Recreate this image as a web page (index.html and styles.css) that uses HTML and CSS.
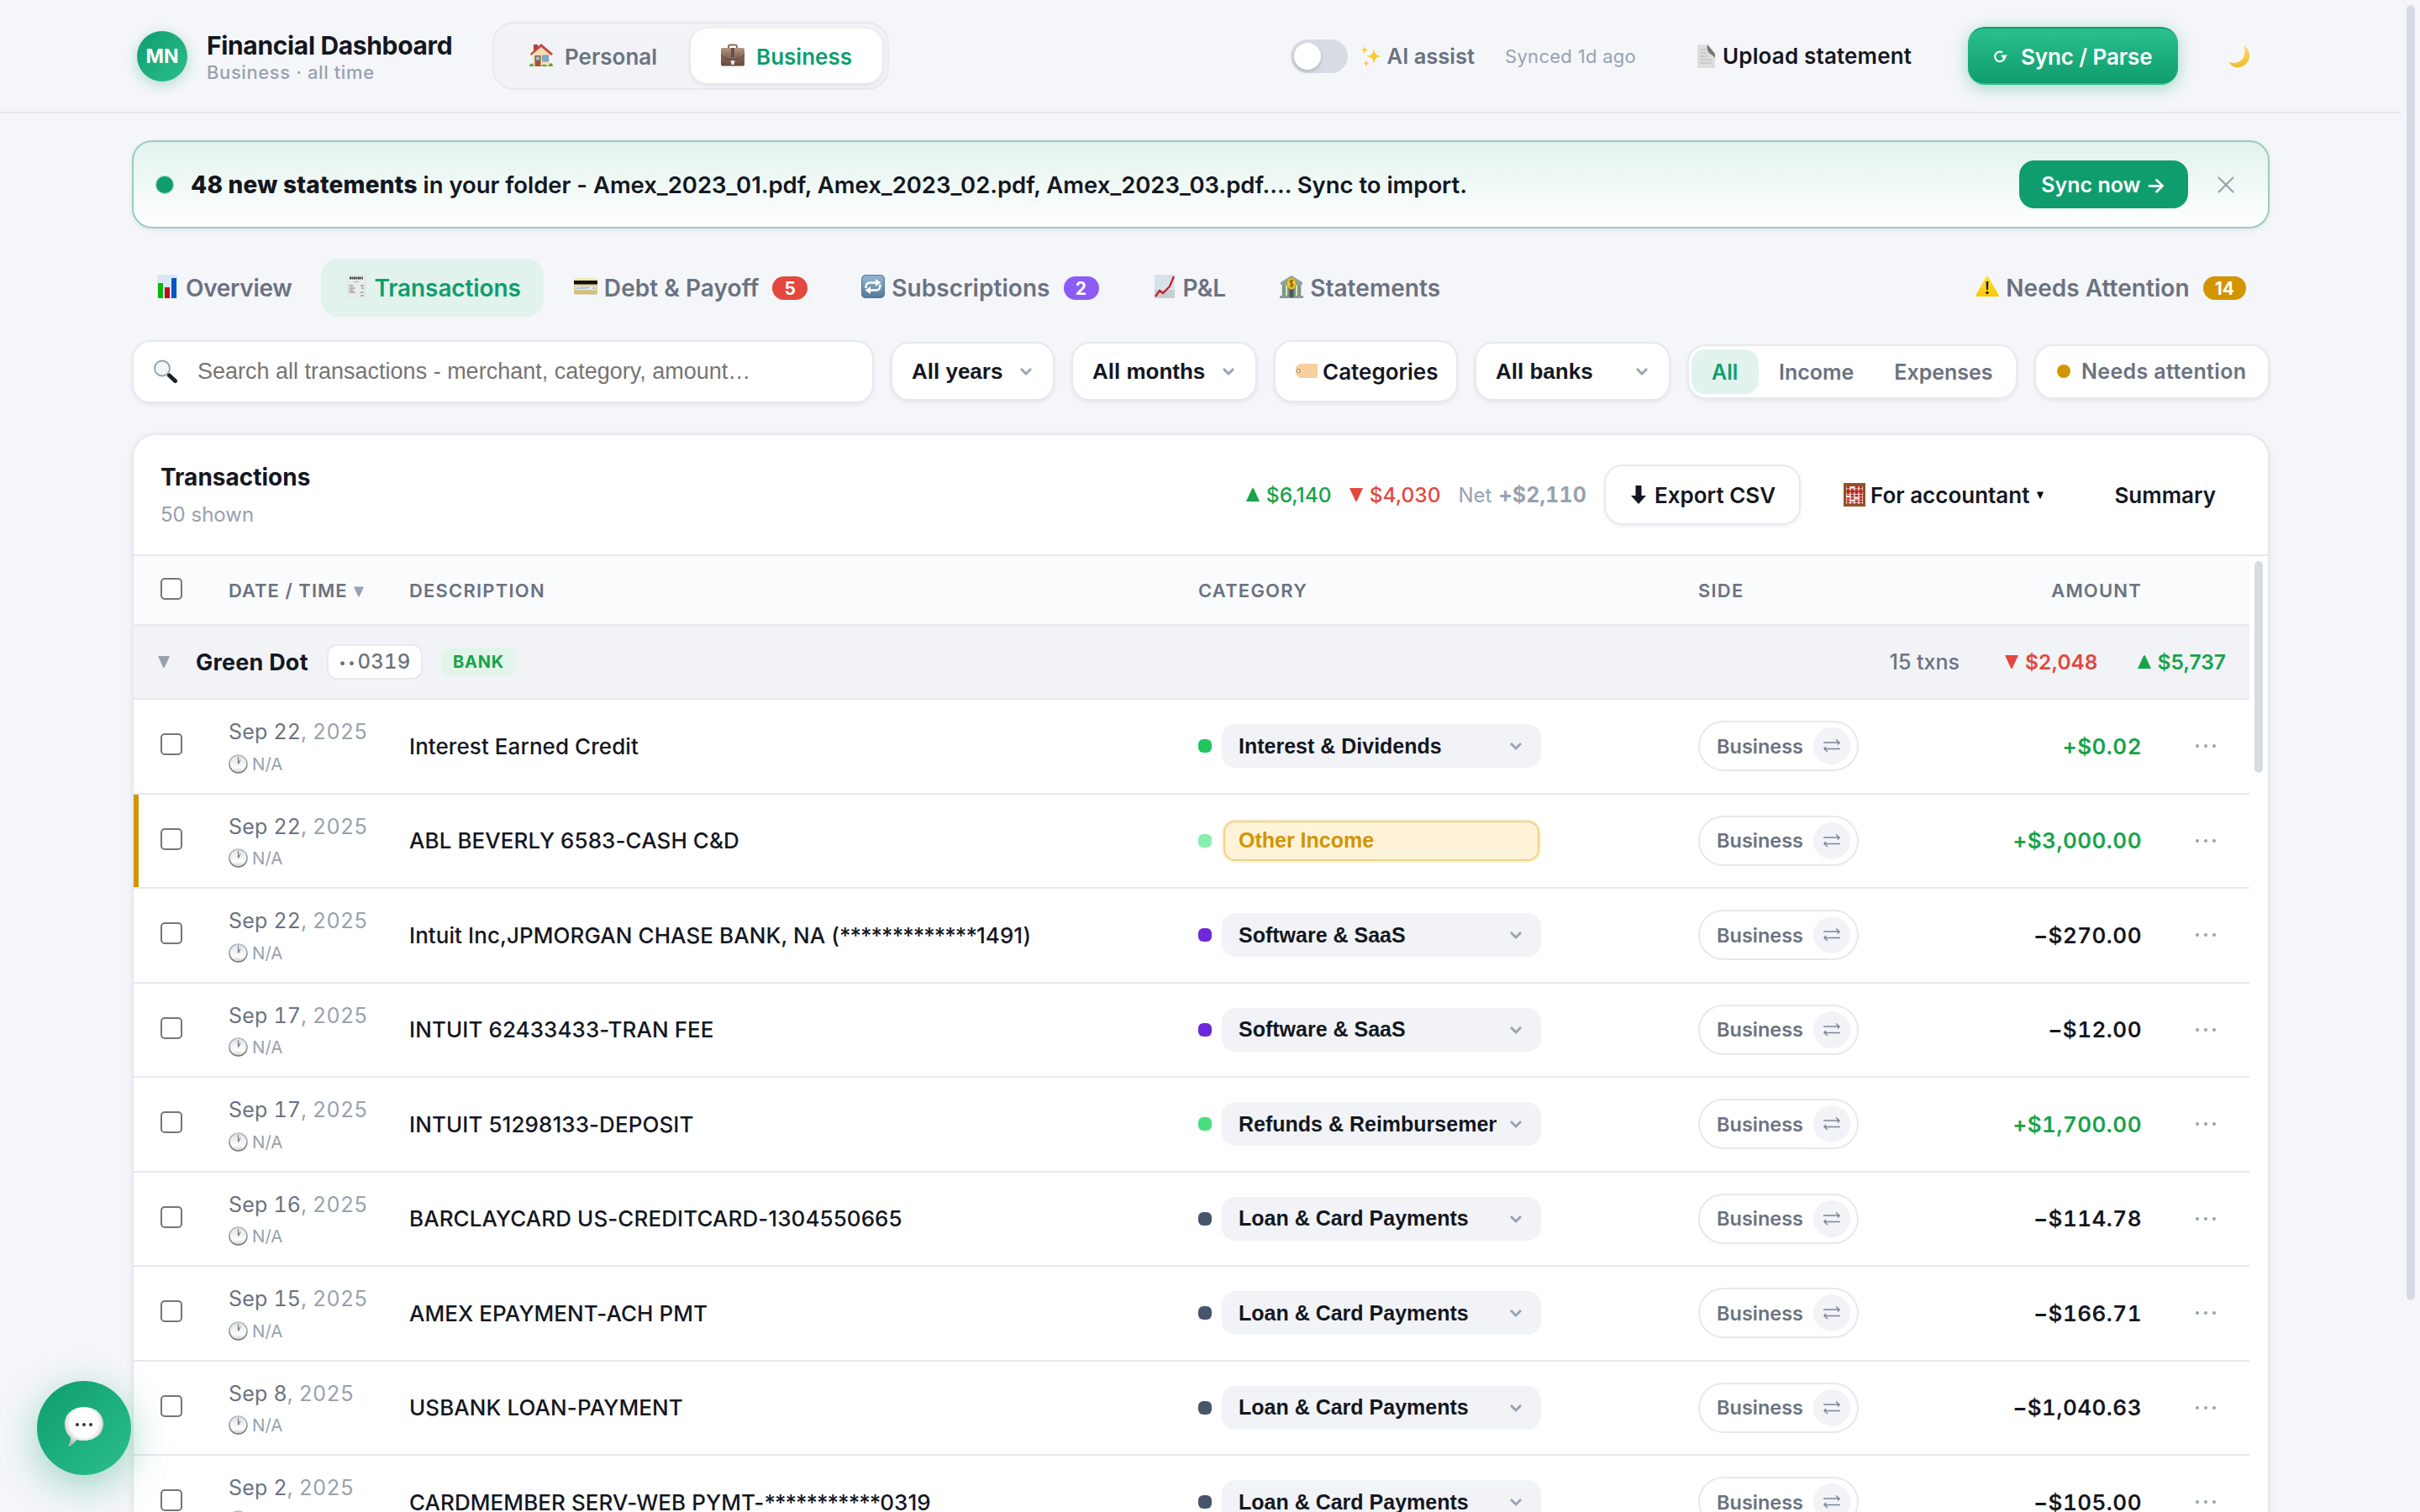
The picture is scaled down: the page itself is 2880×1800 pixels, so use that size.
FILE: index.html
```html
<!DOCTYPE html>
<html lang="en">
<head>
  <meta charset="UTF-8" />
  <title>Financial Dashboard</title>
  <link rel="stylesheet" href="styles.css">
</head>
<body>
  <!-- Icon sprite -->
  <svg class="sprite" width="0" height="0">
    <defs>
      <linearGradient id="gCase" x1="0" y1="0" x2="0" y2="1"><stop offset="0" stop-color="#b79680"/><stop offset=".45" stop-color="#8a6c5a"/><stop offset="1" stop-color="#65493c"/></linearGradient>
      <linearGradient id="gCard" x1="0" y1="0" x2="0" y2="1"><stop offset="0" stop-color="#f3ecb4"/><stop offset="1" stop-color="#c9bd78"/></linearGradient>
      <linearGradient id="gBlue" x1="0" y1="0" x2="0" y2="1"><stop offset="0" stop-color="#96b9d6"/><stop offset="1" stop-color="#557796"/></linearGradient>
      <linearGradient id="gMoon" x1="0" y1="0" x2="0" y2="1"><stop offset="0" stop-color="#f7dc7c"/><stop offset="1" stop-color="#f0bd25"/></linearGradient>
      <linearGradient id="gWarn" x1="0" y1="0" x2="0" y2="1"><stop offset="0" stop-color="#ffe04a"/><stop offset="1" stop-color="#fcc800"/></linearGradient>
      <radialGradient id="gBubble" cx=".5" cy=".4" r=".6"><stop offset=".6" stop-color="#fff"/><stop offset="1" stop-color="#b9b9b9"/></radialGradient>
      <linearGradient id="gClock" x1="0" y1="0" x2="0" y2="1"><stop offset="0" stop-color="#b4bcc6"/><stop offset="1" stop-color="#6f6f70"/></linearGradient>
      <linearGradient id="gFace" x1="0" y1="0" x2="0" y2="1"><stop offset="0" stop-color="#dfe2e6"/><stop offset=".7" stop-color="#fdfdfd"/><stop offset="1" stop-color="#c9c9c9"/></linearGradient>
    </defs>
    <symbol id="i-house" viewBox="0 0 28 28">
      <path d="M5 1h5v8H5z" fill="#a8423a"/>
      <path d="M4 12 14 3l10 9v15H4z" fill="#f3dfb8"/>
      <path d="M14 0 28 12l-2 2L14 4 2 14l-1-2z" fill="#c4473f"/>
      <path d="M6.500 14h7v13h-7z" fill="#9c5533"/><path d="M8 15.500h4v4H8z" fill="#8ccbf2"/>
      <path d="M15.500 14h7v7h-7z" fill="#6fb0dd" stroke="#8a98a0" stroke-width="1"/>
      <path d="M0 27c0-4 4-5 5-1v1zM23 27c0-5 5-5 5 0zM14 27c1-3 6-3 8 0z" fill="#6d9b45"/>
    </symbol>
    <symbol id="i-case" viewBox="0 0 28 28">
      <path d="M9 6V3.500C9 2 10 1.500 11 1.500h6c1 0 2 .5 2 2V6" fill="none" stroke="#8b6f5f" stroke-width="2"/>
      <rect y="5" width="28" height="21.500" rx="2" fill="url(#gCase)"/>
      <path d="M0 13c4 5 9 6 14 6s10-1 14-6" fill="none" stroke="#5a4034" stroke-width="1"/>
      <path d="M12 5h4v11h-4z" fill="#6a5043"/><path d="M11.500 20h5l-1 5h-3z" fill="#e8e6e3"/>
    </symbol>
    <symbol id="i-chart" viewBox="0 0 28 28">
      <path d="M2 0h24v28H2z" fill="#dbe8f2"/>
      <path d="M3 10h6v18H3z" fill="#08b512"/><path d="M11 15h6v13h-6z" fill="#c40d1c"/><path d="M19 4h6v24h-6z" fill="#0a55c4"/>
    </symbol>
    <symbol id="i-receipt" viewBox="0 0 28 28">
      <path d="M3.500 0h21v28h-21z" fill="#ececec" stroke="#d6d6d6" stroke-width=".6"/>
      <path d="M6 4h16" stroke="#444" stroke-width="3" stroke-dasharray="2 .5"/>
      <path d="M11 8.500h6" stroke="#aaa"/>
      <path d="M5.500 13h5M5.500 16h7M5.500 18.500h5M5.500 21h7M19 13h4M20 16h3M19 21h4M19 25h4" stroke="#999" stroke-width="1.400"/>
    </symbol>
    <symbol id="i-card" viewBox="0 0 28 28">
      <rect y="4" width="28" height="19.500" rx="1.500" fill="url(#gCard)"/>
      <path d="M0 7h28v4.500H0z" fill="#111"/><path d="M2 14h24v4H2z" fill="#e9eaf0"/>
      <path d="M3 16.500c2-2 3 1 5-.5s3 1 5 0 3 0 5-.5M22 16h3" stroke="#7b8fd0" fill="none"/>
    </symbol>
    <symbol id="i-repeat" viewBox="0 0 28 28">
      <rect width="28" height="28" rx="5" fill="url(#gBlue)"/><rect x=".7" y=".7" width="26.600" height="26.600" rx="4.500" fill="none" stroke="#54779a" stroke-width="1"/>
      <path d="M5.500 16c0-5 1.500-6.500 5-6.500h8M22.500 12c0 5-1.500 6.500-5 6.500h-8" fill="none" stroke="#fff" stroke-width="2.600"/>
      <path d="M17 5 23.500 9.500 17 14zM11 14 4.500 18.500 11 23z" fill="#fff"/>
    </symbol>
    <symbol id="i-trend" viewBox="0 0 28 28">
      <path d="M2 0h24v28H2z" fill="#d7e3eb"/><path d="M2 18h24v10H2z" fill="#c6cfd5"/>
      <path d="m3 26 5-7 4 3 5-5 3-3 5-12" fill="none" stroke="#d0161c" stroke-width="2.200"/>
    </symbol>
    <symbol id="i-bank" viewBox="0 0 28 28">
      <path d="M1 9 14 1l13 8v3H1z" fill="#8fa5a0"/>
      <path d="M2 12h24v13H2z" fill="#dfe3c0"/><path d="M3 12h4v13H3zM9 12h3v13H9zM16 12h3v13h-3zM21 12h4v13h-4z" fill="#7f958e"/>
      <path d="M0 25h28v3H0z" fill="#8a9b95"/><path d="M11.500 17h5v10h-5z" fill="#4b5b57"/>
      <ellipse cx="14" cy="10.500" rx="5.500" ry="7" fill="#f1c92f" stroke="#b68f12"/>
      <path d="M16 8c-1-2-4-1.500-4 .3 0 2.200 4 1.800 4 4 0 2-3.500 2-4 .2M14 5.500v10" fill="none" stroke="#7c5c05" stroke-width="1.200"/>
    </symbol>
    <symbol id="i-warn" viewBox="0 0 28 28">
      <path d="M14 1.500c.8 0 1.200.5 1.600 1.200L27.500 24c.6 1.300 0 2-1.200 2H1.700C.5 26-.1 25.300.5 24L12.400 2.700c.4-.7.800-1.200 1.600-1.200z" fill="url(#gWarn)"/>
      <path d="M12.600 8h2.800L15 18h-2z" fill="#222"/><circle cx="14" cy="21.500" r="1.700" fill="#222"/>
    </symbol>
    <symbol id="i-search" viewBox="0 0 28 28">
      <path d="m15.500 16.500 3 2.800" stroke="#555" stroke-width="2"/>
      <path d="m18.500 19 7 6.500" stroke="#1c2024" stroke-width="5" stroke-linecap="round"/>
      <circle cx="10" cy="10.500" r="9" fill="#f4f5f7" stroke="#8d9eae" stroke-width="1.800"/>
    </symbol>
    <symbol id="i-tag" viewBox="0 0 28 28">
      <path d="M6 5h21v17H6l-5-4V9z" fill="#f8cf9d"/><circle cx="4.500" cy="13.500" r="2" fill="#fff" stroke="#8b7355"/>
    </symbol>
    <symbol id="i-abacus" viewBox="0 0 28 28">
      <path d="M1 0h26v28H1z" fill="#8f5425"/><path d="M4 4h20v21H4z" fill="#f4e6e0"/>
      <path d="M4 10h20" stroke="#8f5425" stroke-width="2"/>
      <path d="M6.500 4v21M11.500 4v21M16.500 4v21M21.500 4v21" stroke="#c32222" stroke-width="3.600" stroke-dasharray="2.600 .7"/>
      <path d="M9 5h5M4 16h5M14 18h5M9 21h5" stroke="#f6eeee" stroke-width="2"/>
    </symbol>
    <symbol id="i-doc" viewBox="0 0 28 28">
      <path d="M3 0h12l9 11v17H3z" fill="#dedede"/><path d="M15 0c-1 5 0 8 2 10 2 1.500 5 3 7 6v-5z" fill="#777"/>
      <path d="M6 6h7M6 10h8M6 14h9M6 18h14M6 22h14" stroke="#c5c5c5" stroke-width="1.300"/>
    </symbol>
    <symbol id="i-spark" viewBox="0 0 28 28">
      <path d="M17 4c1 7 2 9 9 10-7 1-8 3-9 10-1-7-2-9-9-10 7-1 8-3 9-10z" fill="#fbc92f"/>
      <path d="M6 1c.5 4 1 5 4.500 5.500C7 7 6.500 8 6 12 5.500 8 5 7 1.500 6.500 5 6 5.500 5 6 1zM8 18c.4 3 1 4 4 4.500-3 .5-3.600 1.500-4 4.500-.4-3-1-4-4-4.500 3-.5 3.600-1.500 4-4.500z" fill="#fbc92f"/>
    </symbol>
    <symbol id="i-moon" viewBox="0 0 28 28">
      <path d="M18 1c11 7 9 22-4 26-6 1-11-1-13-6 13 4 22-6 17-20z" fill="url(#gMoon)"/>
    </symbol>
    <symbol id="i-clock" viewBox="0 0 28 28">
      <circle cx="14" cy="14" r="12.800" fill="url(#gFace)" stroke="url(#gClock)" stroke-width="1.800"/>
      <path d="M14 14V3.500M14 14l3-6" stroke="#777" stroke-width="1.400"/>
    </symbol>
    <symbol id="i-bubble" viewBox="0 0 48 48">
      <path d="M24 0c14 0 23 9 23 20S38 40 24 40c-3 0-6 0-9-1-2 3-5 7-10 8 2-3 3-7 3-11C3 32 1 26 1 20 1 9 10 0 24 0z" fill="url(#gBubble)"/>
      <circle cx="16" cy="21" r="2" fill="#333"/><circle cx="24" cy="21" r="2" fill="#333"/><circle cx="32" cy="21" r="2" fill="#333"/>
    </symbol>
    <symbol id="i-chev" viewBox="0 0 16 10"><path d="m2 2 6 6 6-6" fill="none" stroke="#98a1af" stroke-width="2.800"/></symbol>
    <symbol id="i-swap" viewBox="0 0 22 18"><path d="M1 5h19M16 1.500 20 5l-2 2.500M21 12.500H2M6 16l-4-3.500L4 10" fill="none" stroke="#7b8494" stroke-width="1.500"/></symbol>
    <symbol id="i-down" viewBox="0 0 18 22"><path d="M5.500 0h7v12H18l-9 10-9-10h5.500z" fill="#14171f"/></symbol>
    <symbol id="i-x" viewBox="0 0 20 20"><path d="m1 1 18 18M19 1 1 19" stroke="#98a1af" stroke-width="2.200"/></symbol>
    <symbol id="i-tri" viewBox="0 0 16 16"><path d="M0 0h16L9 15.300q-1 1.400-2 0z"/></symbol>
    <symbol id="i-reload" viewBox="0 0 16 16"><path d="M10.500 3.200A5.500 5.500 0 1 0 13 8.500" fill="none" stroke="#fff" stroke-width="2"/><path d="M8.500 6h7.500l-4 5z" fill="#fff"/></symbol>
  </svg>

  <header class="topbar">
    <div class="avatar">MN</div>
    <div class="brand">
      <div class="brand-title">Financial Dashboard</div>
      <div class="brand-sub">Business · all time</div>
    </div>
    <div class="mode-switch">
      <button class="mode"><svg class="icon"><use href="#i-house"/></svg>Personal</button>
      <button class="mode active"><svg class="icon"><use href="#i-case"/></svg>Business</button>
    </div>
    <div class="top-actions">
      <span class="toggle"><span class="knob"></span></span>
      <span class="ai"><svg class="icon"><use href="#i-spark"/></svg>AI assist</span>
      <span class="synced">Synced 1d ago</span>
      <span class="upload"><svg class="icon"><use href="#i-doc"/></svg>Upload statement</span>
      <button class="sync-btn"><svg class="reload"><use href="#i-reload"/></svg>Sync / Parse</button>
      <svg class="icon moon"><use href="#i-moon"/></svg>
    </div>
  </header>

  <main class="page">
    <div class="banner">
      <span class="banner-dot"></span>
      <div class="banner-text"><b>48 new statements</b> in your folder - Amex_2023_01.pdf, Amex_2023_02.pdf, Amex_2023_03.pdf.... Sync to import.</div>
      <button class="banner-btn">Sync now →</button>
      <svg class="close"><use href="#i-x"/></svg>
    </div>

    <nav class="tabs">
      <a class="tab"><svg class="icon"><use href="#i-chart"/></svg>Overview</a>
      <a class="tab active"><svg class="icon"><use href="#i-receipt"/></svg>Transactions</a>
      <a class="tab"><svg class="icon"><use href="#i-card"/></svg>Debt &amp; Payoff <span class="badge red">5</span></a>
      <a class="tab"><svg class="icon"><use href="#i-repeat"/></svg>Subscriptions <span class="badge purple">2</span></a>
      <a class="tab"><svg class="icon"><use href="#i-trend"/></svg>P&amp;L</a>
      <a class="tab"><svg class="icon"><use href="#i-bank"/></svg>Statements</a>
      <a class="tab last"><svg class="icon"><use href="#i-warn"/></svg>Needs Attention <span class="badge amber">14</span></a>
    </nav>

    <div class="filters">
      <div class="search"><svg class="icon"><use href="#i-search"/></svg><span>Search all transactions - merchant, category, amount…</span></div>
      <div class="select years">All years<svg class="chev"><use href="#i-chev"/></svg></div>
      <div class="select months">All months<svg class="chev"><use href="#i-chev"/></svg></div>
      <div class="cat-btn"><svg class="icon"><use href="#i-tag"/></svg>Categories</div>
      <div class="select banks">All banks<svg class="chev"><use href="#i-chev"/></svg></div>
      <div class="segment"><span class="seg active">All</span><span class="seg">Income</span><span class="seg">Expenses</span></div>
      <div class="attention"><i></i>Needs attention</div>
    </div>

    <section class="card">
      <div class="card-head">
        <div>
          <div class="card-title">Transactions</div>
          <div class="card-sub">50 shown</div>
        </div>
        <div class="card-actions">
          <span class="sum up"><svg class="tri flip"><use href="#i-tri"/></svg>$6,140</span>
          <span class="sum down"><svg class="tri"><use href="#i-tri"/></svg>$4,030</span>
          <span class="sum net">Net <b>+$2,110</b></span>
          <button class="export"><svg class="arrow"><use href="#i-down"/></svg>Export CSV</button>
          <button class="ghost"><svg class="icon"><use href="#i-abacus"/></svg>For accountant<svg class="caret"><use href="#i-tri"/></svg></button>
          <button class="ghost">Summary</button>
        </div>
      </div>

      <div class="table">
        <div class="row thead">
          <span><i class="check"></i></span>
          <span class="sorted">DATE / TIME<svg class="sort"><use href="#i-tri"/></svg></span>
          <span>DESCRIPTION</span>
          <span>CATEGORY</span>
          <span>SIDE</span>
          <span class="right">AMOUNT</span>
        </div>
        <div class="group">
          <svg class="fold"><use href="#i-tri"/></svg>
          <span class="group-name">Green Dot</span>
          <span class="acct"><b>••</b>0319</span>
          <span class="kind">BANK</span>
          <span class="txns">15 txns</span>
          <span class="sum down"><svg class="tri"><use href="#i-tri"/></svg>$2,048</span>
          <span class="sum up"><svg class="tri flip"><use href="#i-tri"/></svg>$5,737</span>
        </div>
        <div id="rows"></div>
        <div class="table-scroll"></div>
      </div>
    </section>
  </main>

  <div class="page-scroll"></div>
  <button class="chat"><svg><use href="#i-bubble"/></svg></button>

  <script>
    const rows = [
      { day: "Sep 22", desc: "Interest Earned Credit", cat: "Interest & Dividends", color: "#22c55e", amount: "+$0.02" },
      { day: "Sep 22", desc: "ABL BEVERLY 6583-CASH C&D", cat: "Other Income", color: "#86efac", amount: "+$3,000.00", flag: true },
      { day: "Sep 22", desc: "Intuit Inc,JPMORGAN CHASE BANK, NA (*************1491)", cat: "Software & SaaS", color: "#6d28d9", amount: "−$270.00" },
      { day: "Sep 17", desc: "INTUIT 62433433-TRAN FEE", cat: "Software & SaaS", color: "#6d28d9", amount: "−$12.00" },
      { day: "Sep 17", desc: "INTUIT 51298133-DEPOSIT", cat: "Refunds & Reimbursements", color: "#4ade80", amount: "+$1,700.00" },
      { day: "Sep 16", desc: "BARCLAYCARD US-CREDITCARD-1304550665", cat: "Loan & Card Payments", color: "#475569", amount: "−$114.78" },
      { day: "Sep 15", desc: "AMEX EPAYMENT-ACH PMT", cat: "Loan & Card Payments", color: "#475569", amount: "−$166.71" },
      { day: "Sep 8", desc: "USBANK LOAN-PAYMENT", cat: "Loan & Card Payments", color: "#475569", amount: "−$1,040.63" },
      { day: "Sep 2", desc: "CARDMEMBER SERV-WEB PYMT-***********0319", cat: "Loan & Card Payments", color: "#475569", amount: "−$105.00" }
    ];

    document.getElementById("rows").innerHTML = rows.map(r => `
      <div class="row ${r.flag ? "flagged" : ""}">
        <span><i class="check"></i></span>
        <span class="date">
          <span class="day">${r.day}<em>, 2025</em></span>
          <span class="time"><svg class="clock"><use href="#i-clock"/></svg>N/A</span>
        </span>
        <span class="desc">${r.desc.replace("&", "&amp;").replace(/\*+/, "<span class=\"mask\">$&</span>")}</span>
        <span class="category">
          <i class="dot" style="background:${r.color}"></i>
          <span class="pick"><span class="pick-label">${r.cat.replace("&", "&amp;")}</span>${r.flag ? "" : '<svg class="chev"><use href="#i-chev"/></svg>'}</span>
        </span>
        <span><span class="side">Business<span class="swap"><svg><use href="#i-swap"/></svg></span></span></span>
        <span class="amount ${r.amount[0] === "+" ? "in" : ""}">${r.amount}</span>
        <span class="more"><i></i><i></i><i></i></span>
      </div>`).join("");
  </script>
</body>
</html>
```
FILE: styles.css
```css
* {
  box-sizing: border-box;
}

body {
  margin: 0;
  width: 2880px;
  height: 1800px;
  overflow: hidden;
  background: #f5f6fa;
  color: #14171f;
  font-family: Inter, sans-serif;
  font-size: 26px;
}

button {
  font: inherit;
  color: inherit;
  border: none;
  background: none;
  padding: 0;
}

i,
em {
  font-style: normal;
}

.sprite {
  position: absolute;
}

.icon {
  width: 28px;
  height: 28px;
  flex: none;
}

/* Top bar */
.topbar {
  width: 2858px;
  height: 135px;
  padding: 0 159px 0 163px;
  border-bottom: 2px solid #e7e9ee;
  display: flex;
  align-items: center;
}

.avatar {
  width: 60px;
  height: 60px;
  border-radius: 50%;
  background: linear-gradient(135deg, #0f9d6e, #2bbf8c);
  box-shadow: 0 4px 16px rgba(15, 157, 110, 0.3);
  color: #fff;
  font-size: 23px;
  font-weight: 700;
  line-height: 61px;
  text-align: center;
}

.brand {
  width: 340px;
  margin-left: 23px;
  padding-top: 3px;
}

.brand-title {
  font-size: 30px;
  font-weight: 700;
  line-height: 36px;
  letter-spacing: -0.35px;
}

.brand-sub {
  font-size: 22px;
  font-weight: 500;
  line-height: 28px;
  letter-spacing: 0.6px;
  color: #98a1af;
}

.mode-switch {
  display: flex;
  gap: 4px;
  height: 81px;
  padding: 6px;
  border: 2px solid #e7e9ee;
  border-radius: 26px;
  background: #f1f3f7;
}

.mode {
  display: flex;
  align-items: center;
  gap: 14px;
  padding: 2px 36px 0;
  border-radius: 20px;
  font-weight: 600;
  color: #6b7280;
}

.mode .icon {
  margin-top: -4px;
}

.mode.active {
  background: #fff;
  color: #0f9d6e;
  box-shadow: 0 2px 6px rgba(20, 25, 40, 0.1);
}

.top-actions {
  margin-left: auto;
  display: flex;
  align-items: center;
}

.toggle {
  width: 68px;
  height: 40px;
  padding: 4px;
  border-radius: 20px;
  background: #d7dce4;
}

.knob {
  display: block;
  width: 32px;
  height: 32px;
  border-radius: 50%;
  background: #fff;
  box-shadow: 0 2px 4px rgba(0, 0, 0, 0.2);
}

.ai {
  display: flex;
  align-items: center;
  gap: 5px;
  margin-left: 14px;
  font-weight: 600;
  font-size: 25.5px;
  color: #6b7280;
}

.synced {
  margin-left: 36px;
  width: 226px;
  font-size: 22px;
  letter-spacing: 0.3px;
  color: #98a1af;
}

.upload {
  display: flex;
  align-items: center;
  gap: 5px;
  width: 325px;
  font-weight: 600;
  letter-spacing: 0.15px;
}

.sync-btn {
  display: flex;
  align-items: center;
  gap: 16px;
  width: 250px;
  height: 69px;
  padding: 1px 0 0 30px;
  border-radius: 20px;
  background: linear-gradient(#2bc08d, #0f9d6e);
  border-top: 2px solid #0f9d6e;
  border-bottom: 2px solid #2bc08d;
  box-shadow: 0 4px 20px rgba(15, 157, 110, 0.35);
  color: #fff;
  font-weight: 600;
  letter-spacing: -0.1px;
}

.reload {
  width: 17px;
  height: 17px;
}

.moon {
  margin: 0 19px 0 60px;
}

/* Page column */
.page {
  width: 2544px;
  margin: 32px 0 0 157px;
}

.banner {
  display: flex;
  align-items: center;
  height: 105px;
  padding: 0 40px 0 27px;
  border: 2px solid #9accc0;
  border-radius: 24px;
  background: linear-gradient(#e1f3ec, #fff);
  box-shadow: 0 2px 6px rgba(20, 25, 40, 0.07);
}

.banner-dot {
  width: 20px;
  height: 20px;
  border-radius: 50%;
  background: #0f9d6e;
  box-shadow: 0 0 0 1px rgba(15, 157, 110, 0.35);
}

.banner-text {
  flex: 1;
  margin-left: 21px;
  font-size: 27.5px;
  font-weight: 600;
  letter-spacing: -0.04px;
}

.banner-text b {
  font-size: 28px;
  font-weight: 800;
  letter-spacing: 0.2px;
}

.banner-btn {
  width: 201px;
  height: 57px;
  border-radius: 18px;
  background: #0f9d6e;
  color: #fff;
  font-size: 25px;
  font-weight: 600;
}

.close {
  width: 20px;
  height: 20px;
  margin-left: 35px;
}

/* Tabs */
.tabs {
  display: flex;
  gap: 8px;
  margin-top: 36px;
}

.tab {
  display: flex;
  align-items: center;
  height: 69px;
  padding: 0 28px;
  border-radius: 20px;
  font-size: 28px;
  font-weight: 600;
  letter-spacing: 0.05px;
  color: #6b7280;
}

.tab:first-child {
  padding-right: 26px;
  letter-spacing: -0.3px;
}

.tab .icon {
  margin: -3px 8px 0 0;
}

.tab.active {
  padding-right: 27px;
  background: #e1f3ec;
  color: #0f9d6e;
  letter-spacing: -0.1px;
}

.tab.last {
  margin-left: auto;
}

.badge {
  height: 28px;
  min-width: 42px;
  margin-left: 16px;
  padding: 0 14px;
  border-radius: 14px;
  color: #fff;
  font-size: 21px;
  font-weight: 700;
  line-height: 29px;
  text-align: center;
}

.red { background: #e2483d; }
.purple { background: #8b5cf6; }
.amber { background: #d29500; }

/* Filters */
.filters {
  display: flex;
  align-items: center;
  gap: 20px;
  height: 76px;
  margin-top: 27px;
}

.search,
.select,
.cat-btn,
.segment,
.attention {
  display: flex;
  align-items: center;
  background: #fff;
  border: 2px solid #e7e9ee;
  border-radius: 22px;
  box-shadow: 0 2px 5px rgba(20, 25, 40, 0.07);
}

.search {
  flex: 1;
  height: 75px;
  padding: 0 24px;
  gap: 24px;
  font: 27px "Liberation Sans", sans-serif;
  color: #757575;
}

.select {
  justify-content: space-between;
  height: 70px;
  padding: 0 24px 0 23px;
  font: bold 26px "Liberation Sans", sans-serif;
}

.years { width: 195px; }
.months { width: 221px; }
.banks { width: 233px; }

.chev {
  width: 16px;
  height: 10px;
  flex: none;
}

.cat-btn {
  width: 219px;
  height: 74px;
  padding-left: 23px;
  gap: 5px;
  font-weight: 600;
}

.segment {
  width: 393px;
  height: 65px;
  padding: 0 3px;
}

.seg {
  height: 53px;
  padding: 0 24px;
  border-radius: 16px;
  font-size: 25px;
  font-weight: 600;
  line-height: 54px;
  color: #6b7280;
}

.seg.active {
  width: 80px;
  background: #e1f3ec;
  color: #0f9d6e;
}

.attention {
  width: 280px;
  height: 65px;
  padding-left: 25px;
  gap: 13px;
  font-size: 25px;
  font-weight: 600;
  letter-spacing: 0.35px;
  color: #6b7280;
}

.attention i {
  width: 16px;
  height: 16px;
  border-radius: 50%;
  background: #d29500;
}

/* Transactions card */
.card {
  height: 1284px;
  margin-top: 36px;
  background: #fff;
  border: 2px solid #e7e9ee;
  border-bottom: none;
  border-radius: 28px 28px 0 0;
  box-shadow: 0 2px 8px rgba(20, 25, 40, 0.07);
  overflow: hidden;
}

.card-head {
  display: flex;
  align-items: center;
  justify-content: space-between;
  height: 144px;
  padding: 0 28px 0 32px;
  border-bottom: 2px solid #e7e9ee;
}

.card-title {
  font-size: 28px;
  font-weight: 700;
  line-height: 46px;
}

.card-sub {
  padding-top: 1px;
  font-size: 24px;
  line-height: 42px;
  color: #98a1af;
}

.card-actions {
  display: flex;
  align-items: center;
}

.sum {
  display: flex;
  align-items: center;
  gap: 8px;
  font-size: 24.5px;
  font-weight: 500;
  margin-right: 21px;
}

.up { color: #16a34a; fill: #16a34a; }
.down { color: #e2483d; fill: #e2483d; }

.net {
  color: #98a1af;
  font-weight: 400;
  font-size: 24px;
  font-variant-numeric: tabular-nums;
}

.net b {
  font-size: 25px;
  letter-spacing: 0.1px;
}

.tri {
  width: 16px;
  height: 16px;
}

.flip {
  transform: rotate(180deg);
}

.export {
  display: flex;
  align-items: center;
  gap: 10px;
  width: 234px;
  height: 72px;
  margin-right: 16px;
  padding-left: 30px;
  border: 2px solid #e7e9ee;
  border-radius: 22px;
  box-shadow: 0 2px 5px rgba(20, 25, 40, 0.07);
  font-weight: 600;
}

.arrow {
  width: 18px;
  height: 22px;
}

.ghost {
  display: flex;
  align-items: center;
  gap: 5px;
  padding: 0 34px;
  font-weight: 600;
}

.ghost + .ghost {
  margin-left: 16px;
}

.caret {
  width: 8px;
  height: 9px;
  margin-left: 4px;
}

/* Table */
.table {
  position: relative;
}

.row {
  display: grid;
  grid-template-columns: 81px 215px 939px 595px 228px 300px 128px;
  align-items: center;
  width: 2518px;
  height: 112.5px;
  padding-left: 32px;
  border-bottom: 2px solid #e7e9ee;
}

.thead {
  height: 83px;
  background: #fafbfd;
  font-size: 22px;
  font-weight: 600;
  letter-spacing: 1.2px;
  color: #6b7280;
}

.right {
  text-align: right;
}

.check {
  display: block;
  width: 26px;
  height: 26px;
  margin-top: -4px;
  border: 2px solid #767676;
  border-radius: 5px;
  background: #fff;
}

.sorted {
  letter-spacing: 1px;
}

.sort {
  width: 12px;
  height: 13px;
  margin-left: 7px;
  fill: #98a1af;
}

.group {
  display: flex;
  align-items: center;
  width: 2518px;
  height: 88px;
  padding: 0 7px 0 29px;
  border-bottom: 2px solid #e7e9ee;
  background: #f1f3f7;
}

.fold {
  width: 14px;
  height: 14px;
  fill: #98a1af;
}

.group-name {
  width: 156px;
  margin-left: 31px;
  font-size: 27px;
  font-weight: 700;
  letter-spacing: 0.2px;
}

.acct {
  width: 114px;
  height: 42px;
  border: 2px solid #e7e9ee;
  border-radius: 12px;
  background: #fff;
  color: #6b7280;
  font-size: 24px;
  font-weight: 500;
  line-height: 38px;
  letter-spacing: 0.2px;
  text-align: center;
  white-space: nowrap;
  font-variant-numeric: tabular-nums;
}

.acct b {
  font-size: 15px;
  font-weight: 500;
  letter-spacing: 3px;
  vertical-align: 2px;
}

.kind {
  width: 89px;
  height: 34px;
  margin-left: 22px;
  border-radius: 10px;
  background: #e3f5ea;
  color: #16a34a;
  font-size: 20px;
  font-weight: 700;
  line-height: 34px;
  letter-spacing: 0.8px;
  text-align: center;
}

.txns {
  margin-left: auto;
  margin-right: 54px;
  font-size: 25px;
  font-weight: 500;
  color: #6b7280;
}

.group .sum {
  font-weight: 600;
}

.group .sum + .sum {
  margin-left: 26px;
}

.flagged {
  box-shadow: inset 6px 0 #d29500;
}

.day {
  display: block;
  margin-top: 2px;
  font-size: 25px;
  line-height: 40px;
  letter-spacing: 0.2px;
  color: #6b7280;
  font-variant-numeric: tabular-nums;
}

.day em {
  color: #98a1af;
}

.time {
  display: flex;
  align-items: center;
  gap: 5px;
  height: 36px;
  font-size: 20.5px;
  color: #98a1af;
}

.clock {
  width: 23px;
  height: 23px;
}

.desc {
  font-weight: 500;
  letter-spacing: 0.07px;
  white-space: nowrap;
}

.mask {
  letter-spacing: -1px;
}

.category {
  display: flex;
  align-items: center;
  gap: 12px;
}

.dot {
  width: 16px;
  height: 16px;
  border-radius: 6px;
}

.pick {
  display: flex;
  align-items: center;
  justify-content: space-between;
  width: 380px;
  height: 52px;
  padding: 0 22px 0 20px;
  border-radius: 16px;
  background: #f1f3f7;
  font: bold 25px "Liberation Sans", sans-serif;
}

.pick-label {
  width: 307px;
  overflow: hidden;
  white-space: nowrap;
}

.flagged .pick {
  width: 376px;
  height: 48px;
  margin-left: 2px;
  padding-left: 16px;
  border: 2px solid #efd38a;
  box-shadow: 0 0 0 2px #fef3d9;
  border-radius: 14px;
  background: #fef3d9;
  color: #d29500;
}

.side {
  display: flex;
  align-items: center;
  justify-content: space-between;
  width: 191px;
  height: 60px;
  padding: 0 8px 0 20px;
  border: 2px solid #e7e9ee;
  border-radius: 30px;
  font-size: 23.5px;
  font-weight: 600;
  color: #6b7280;
}

.swap {
  display: flex;
  align-items: center;
  justify-content: center;
  width: 44px;
  height: 44px;
  border-radius: 50%;
  background: #f1f3f7;
}

.swap svg {
  width: 22px;
  height: 18px;
}

.amount {
  text-align: right;
  font-weight: 600;
  letter-spacing: 0.5px;
  font-variant-numeric: tabular-nums;
}

.in {
  color: #16a34a;
}

.more {
  display: flex;
  gap: 6px;
  padding-left: 64px;
}

.more i {
  width: 4px;
  height: 4px;
  border-radius: 50%;
  background: #98a1af;
}

.table-scroll {
  position: absolute;
  top: 6px;
  right: 6px;
  width: 10px;
  height: 252px;
  border-radius: 5px;
  background: #d7dce4;
}

.page-scroll {
  position: fixed;
  top: 6px;
  right: 6px;
  width: 10px;
  height: 1542px;
  border-radius: 5px;
  background: #d7dce4;
}

/* Floating chat button */
.chat {
  position: fixed;
  left: 44px;
  top: 1644px;
  width: 112px;
  height: 112px;
  border-radius: 50%;
  background: linear-gradient(135deg, #0f9d6e, #2bbf8c);
  box-shadow: 0 12px 48px rgba(15, 157, 110, 0.4);
}

.chat svg {
  display: block;
  width: 48px;
  height: 48px;
  margin: -2px auto 0;
}
```
